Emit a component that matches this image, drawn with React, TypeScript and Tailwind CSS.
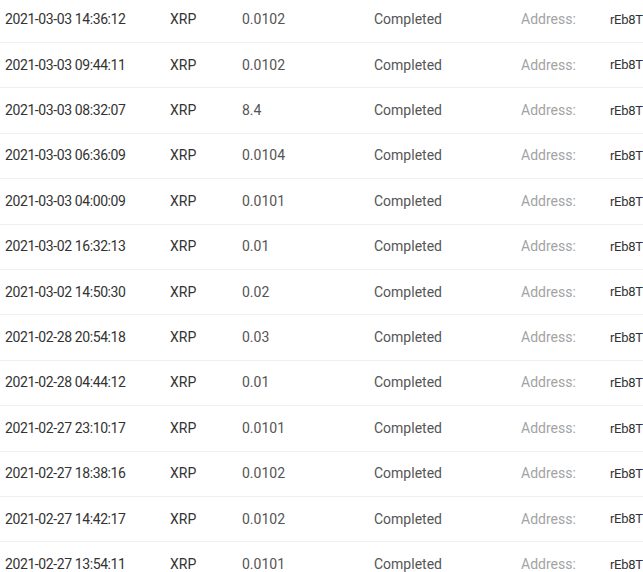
import React from 'react';

const rows: [string, string][] = [
    ['2021-03-03 14:36:12', '0.0102'],
    ['2021-03-03 09:44:11', '0.0102'],
    ['2021-03-03 08:32:07', '8.4'],
    ['2021-03-03 06:36:09', '0.0104'],
    ['2021-03-03 04:00:09', '0.0101'],
    ['2021-03-02 16:32:13', '0.01'],
    ['2021-03-02 14:50:30', '0.02'],
    ['2021-02-28 20:54:18', '0.03'],
    ['2021-02-28 04:44:12', '0.01'],
    ['2021-02-27 23:10:17', '0.0101'],
    ['2021-02-27 18:38:16', '0.0102'],
    ['2021-02-27 14:42:17', '0.0102'],
    ['2021-02-27 13:54:11', '0.0101'],
];

export default function App() {
    return (
        <div className="w-[643px] h-[572px] overflow-hidden bg-white" style={{ fontFamily: 'Roboto, "Liberation Sans", sans-serif' }}>
            <div className="-mt-[2.5px]">
                {rows.map(([time, amount], i) => (
                    <div key={i} className="flex items-center h-[45.42px] border-b border-[#f0f0f0] text-[14px] whitespace-nowrap">
                        <div className="w-[170px] shrink-0 pl-[5px] text-[#333] tracking-[-0.4px]">{time}</div>
                        <div className="w-[72px] shrink-0 text-[#333]">XRP</div>
                        <div className="w-[132px] shrink-0 text-[#555]">{amount}</div>
                        <div className="w-[147px] shrink-0 text-[#555]">Completed</div>
                        <div className="w-[89px] shrink-0 text-[#a3a3a3]">Address:</div>
                        <div className="shrink-0 text-[13px] text-[#333] tracking-[-0.3px]">rEb8T</div>
                    </div>
                ))}
            </div>
        </div>
    );
}
